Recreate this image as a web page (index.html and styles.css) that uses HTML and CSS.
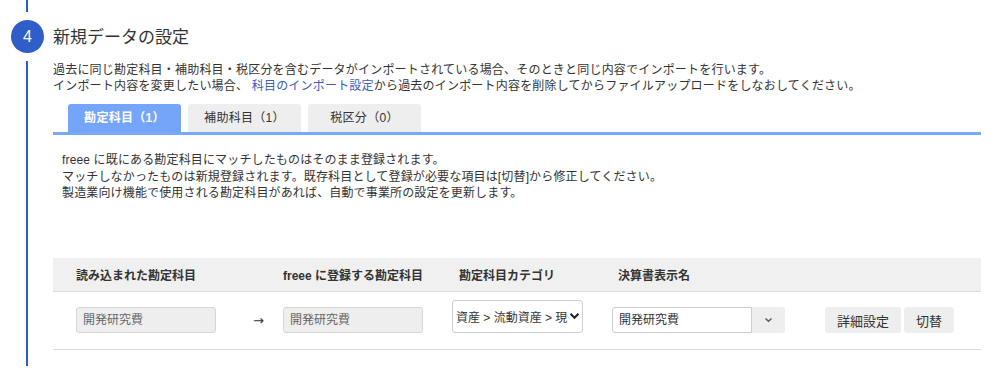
FILE: index.html
```html
<!DOCTYPE html>
<html lang="ja">
<head>
    <meta charset="UTF-8">
    <meta name="viewport" content="width=device-width, initial-scale=1.0">
    <title>新規データの設定</title>
    <link rel="stylesheet" href="styles.css">
</head>
<body>
    <div class="step">
        <div class="timeline">
            <div class="line line-top"></div>
            <div class="badge">4</div>
            <div class="line line-rest"></div>
        </div>

        <div class="content">
            <h2 class="title">新規データの設定</h2>
            <p class="lead">
                過去に同じ勘定科目・補助科目・税区分を含むデータがインポートされている場合、そのときと同じ内容でインポートを行います。<br>
                インポート内容を変更したい場合、 <a href="#" class="link">科目のインポート設定</a>から過去のインポート内容を削除してからファイルアップロードをしなおしてください。
            </p>

            <div class="tabs">
                <div class="tab active">勘定科目（1）</div>
                <div class="tab">補助科目（1）</div>
                <div class="tab">税区分（0）</div>
            </div>

            <div class="notes">
                freee に既にある勘定科目にマッチしたものはそのまま登録されます。<br>
                マッチしなかったものは新規登録されます。既存科目として登録が必要な項目は[切替]から修正してください。<br>
                製造業向け機能で使用される勘定科目があれば、自動で事業所の設定を更新します。
            </div>

            <div class="table">
                <div class="grid thead">
                    <div class="th span2">読み込まれた勘定科目</div>
                    <div class="th">freee に登録する勘定科目</div>
                    <div class="th pad7">勘定科目カテゴリ</div>
                    <div class="th pad6">決算書表示名</div>
                    <div class="th"></div>
                </div>
                <div class="grid trow">
                    <div class="field disabled">開発研究費</div>
                    <div class="arrow">→</div>
                    <div class="field disabled">開発研究費</div>
                    <div class="select">
                        <span class="select-text">資産 &gt; 流動資産 &gt; 現金及び預金</span>
                        <svg width="11" height="8" viewBox="0 0 11 8"><path d="M1.5 1.8 L5.5 5.8 L9.5 1.8" fill="none" stroke="#222" stroke-width="2"/></svg>
                    </div>
                    <div class="combo">
                        <div class="field">開発研究費</div>
                        <div class="combo-btn">
                            <svg width="9" height="6" viewBox="0 0 9 6"><path d="M1.5 1.5 L4.5 4.3 L7.5 1.5" fill="none" stroke="#555" stroke-width="1.3"/></svg>
                        </div>
                    </div>
                    <div class="actions">
                        <button type="button" class="btn">詳細設定</button>
                        <button type="button" class="btn">切替</button>
                    </div>
                </div>
            </div>
        </div>
    </div>
</body>
</html>
```

FILE: styles.css
```css
body {
    margin: 0;
    font-family: "Liberation Sans", "Noto Sans CJK JP", sans-serif;
    color: #333;
    background: #fff;
}

.step {
    display: flex;
    height: 366px;
}

.timeline {
    width: 53px;
    flex-shrink: 0;
    display: flex;
    flex-direction: column;
}

.line {
    width: 2px;
    margin-left: 26px;
    background: #2b5bd0;
}

.line-top {
    height: 12px;
}

.line-rest {
    flex: 1;
    margin-top: 8px;
}

.badge {
    width: 33px;
    height: 33px;
    margin: 8px 0 0 11px;
    border-radius: 50%;
    background: #2f5ec8;
    color: #fff;
    font-size: 16px;
    line-height: 33px;
    text-align: center;
}

.content {
    width: 928px;
}

.title {
    margin: 26px 0 0;
    font-size: 17px;
    font-weight: normal;
    line-height: 24px;
    color: #333;
}

.lead {
    margin: 12px 0 0;
    font-size: 12px;
    line-height: 16px;
    letter-spacing: 0.2px;
}

.link {
    color: #3a5bb8;
    text-decoration: none;
}

.tabs {
    display: flex;
    gap: 7px;
    margin-top: 10px;
    padding-left: 15px;
    border-bottom: 3px solid #78a8fb;
}

.tab {
    width: 113px;
    height: 28px;
    line-height: 28px;
    text-align: center;
    font-size: 12px;
    letter-spacing: 0.3px;
    background: #eeeeee;
    border-radius: 3px 3px 0 0;
    color: #333;
}

.tab.active {
    background: #74a5f9;
    color: #fff;
    font-weight: bold;
}

.notes {
    margin-top: 17px;
    padding-left: 9px;
    font-size: 12px;
    line-height: 16.5px;
    letter-spacing: 0.15px;
}

.table {
    margin-top: 56px;
}

.grid {
    display: grid;
    grid-template-columns: 177px 30px 169px 160px 213px auto;
    padding-left: 23px;
    align-items: center;
}

.thead {
    height: 33px;
    background: #f0f0f0;
    border-bottom: 1px solid #dcdcdc;
}

.th {
    font-size: 12px;
    font-weight: bold;
    color: #333;
}

.span2 {
    grid-column: span 2;
}

.pad7 {
    padding-left: 7px;
}

.pad6 {
    padding-left: 6px;
}

.trow {
    height: 57px;
    border-bottom: 1px solid #dcdcdc;
}

.field {
    box-sizing: border-box;
    width: 140px;
    height: 26px;
    padding-left: 6px;
    border: 1px solid #cfcfcf;
    border-radius: 3px;
    font-size: 12px;
    line-height: 24px;
    color: #333;
    background: #fff;
}

.field.disabled {
    background: #eeeeee;
    color: #666;
    border-color: #d6d6d6;
}

.arrow {
    font-family: "DejaVu Sans", sans-serif;
    font-size: 13px;
    color: #333;
}

.select {
    box-sizing: border-box;
    width: 131px;
    height: 33px;
    align-self: start;
    margin-top: 8px;
    padding: 0 2px 0 3px;
    display: flex;
    align-items: center;
    border: 1px solid #cfcfcf;
    border-radius: 3px;
    background: #fff;
    font-size: 12px;
}

.select-text {
    flex: 1;
    overflow: hidden;
    white-space: nowrap;
}

.select svg {
    flex-shrink: 0;
    margin-left: 1px;
}

.combo {
    display: flex;
}

.combo .field {
    border-radius: 3px 0 0 3px;
}

.combo-btn {
    width: 33px;
    height: 26px;
    display: flex;
    align-items: center;
    justify-content: center;
    background: #eeeeee;
    border-radius: 0 3px 3px 0;
}

.actions {
    display: flex;
    gap: 3px;
}

.btn {
    height: 26px;
    padding: 0 12px;
    border: none;
    border-radius: 3px;
    background: #eeeeee;
    color: #333;
    font-family: inherit;
    font-size: 13px;
    cursor: pointer;
}
```
